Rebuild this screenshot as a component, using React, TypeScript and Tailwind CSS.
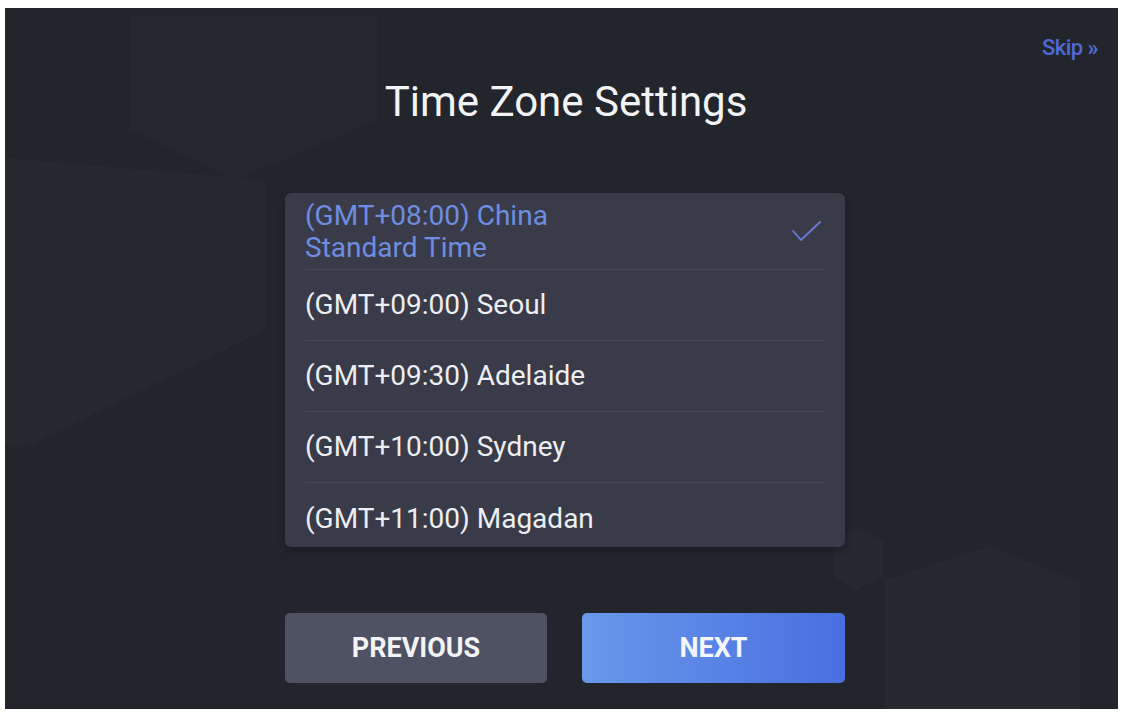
import React from 'react';

const zones = [
  { label: '(GMT+08:00) China Standard Time', selected: true },
  { label: '(GMT+09:00) Seoul' },
  { label: '(GMT+09:30) Adelaide' },
  { label: '(GMT+10:00) Sydney' },
  { label: '(GMT+11:00) Magadan' },
];

function Backdrop() {
  // faint hexagon shapes behind the wizard
  return (
    <svg className="absolute inset-0 w-full h-full" viewBox="0 0 1113 701" preserveAspectRatio="none">
      <polygon points="125,7 372,7 372,112 230,172 125,122" fill="#25282f" />
      <polygon points="0,150 260,172 260,322 25,437 0,437" fill="#262930" />
      <polygon points="828,532 852,520 878,532 878,568 852,582 828,568" fill="#262930" />
      <polygon points="880,572 985,538 1075,575 1075,701 880,701" fill="#262930" />
    </svg>
  );
}

export default function App() {
  return (
    <div className="w-[1126px] h-[714px] bg-white pt-[8px] pl-[5px]" style={{ fontFamily: 'Roboto, "Noto Sans", sans-serif' }}>
      <div className="relative w-[1113px] h-[701px] bg-[#22252b] overflow-hidden">
        <Backdrop />

        <div className="relative flex flex-col h-full">
          {/* top bar */}
          <div className="flex justify-end items-center pt-[20px] pr-[20px] h-[60px]">
            <span className="text-[22px] leading-[28px] font-medium text-[#4f6ad8] tracking-tight">
              Skip <span className="text-[22px] font-bold">»</span>
            </span>
          </div>

          {/* title */}
          <h1 className="text-center text-[42px] leading-[48px] text-[#f2f3f5] mt-[10px] ml-[9px]">Time Zone Settings</h1>

          {/* zone list */}
          <div className="ml-[280px] mt-[67px] w-[560px] h-[354px] bg-[#3a3b48] rounded-[6px] px-[20px] shadow-[0_4px_10px_rgba(0,0,0,0.3)]">
            {zones.map((z, i) => (
              <div
                key={i}
                className={`flex items-center justify-between ${i === 0 ? 'h-[77px]' : 'h-[71px]'} ${i < zones.length - 1 ? 'border-b border-[#474856]' : ''}`}
              >
                {z.selected ? (
                  <>
                    <span className="w-[300px] text-[28px] leading-[32px] text-[#6f8de0] pt-[2px]">{z.label}</span>
                    <svg width="34" height="26" viewBox="0 0 34 26" fill="none" className="mr-[2px] mt-[2px]">
                      <path d="M4 12 L12 21 L31 3" stroke="#6b7bd6" strokeWidth="1.8" strokeLinecap="round" strokeLinejoin="round" />
                    </svg>
                  </>
                ) : (
                  <span className="text-[28px] leading-[32px] text-[#eceef2]">{z.label}</span>
                )}
              </div>
            ))}
          </div>

          {/* buttons */}
          <div className="ml-[280px] mt-[66px] flex gap-[35px]">
            <button className="w-[262px] h-[70px] rounded-[5px] bg-[#4f5263] text-[27px] font-bold text-[#f2f3f5]">PREVIOUS</button>
            <button className="w-[263px] h-[70px] rounded-[5px] bg-gradient-to-r from-[#6a98ea] to-[#4a6ee0] text-[27px] font-bold text-[#f4f6fb]">NEXT</button>
          </div>
        </div>
      </div>
    </div>
  );
}
